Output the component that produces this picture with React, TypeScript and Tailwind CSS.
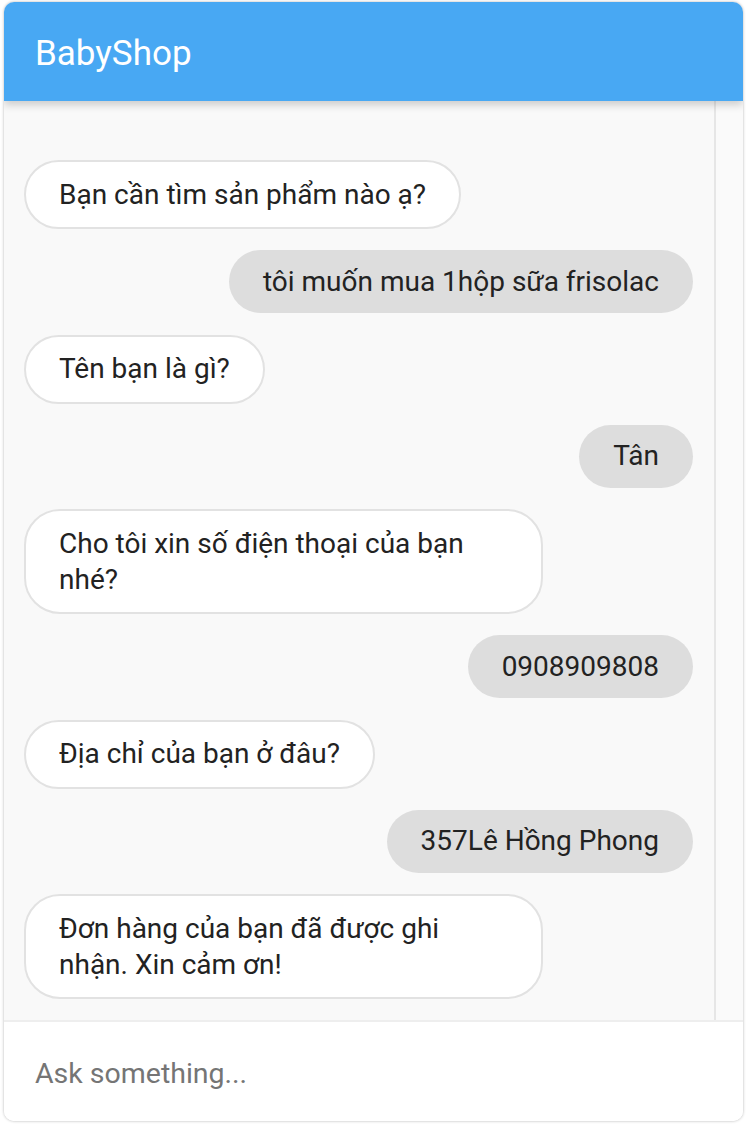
import React from 'react';

type Msg = { from: 'bot' | 'user'; text: string };

const messages: Msg[] = [
  { from: 'bot', text: 'Bạn cần tìm sản phẩm nào ạ?' },
  { from: 'user', text: 'tôi muốn mua 1hộp sữa frisolac' },
  { from: 'bot', text: 'Tên bạn là gì?' },
  { from: 'user', text: 'Tân' },
  { from: 'bot', text: 'Cho tôi xin số điện thoại của bạn nhé?' },
  { from: 'user', text: '0908909808' },
  { from: 'bot', text: 'Địa chỉ của bạn ở đâu?' },
  { from: 'user', text: '357Lê Hồng Phong' },
  { from: 'bot', text: 'Đơn hàng của bạn đã được ghi nhận. Xin cảm ơn!' },
];

export default function App() {
  return (
    <div className="min-h-screen bg-white pt-[2px] pl-[4px] pr-[3px] pb-[3px] font-['Roboto',sans-serif]">
      <div className="h-[1119px] flex flex-col bg-white rounded-[10px] overflow-hidden shadow-[0_0_3px_rgba(0,0,0,0.3)]">
        {/* Header */}
        <div className="relative z-10 h-[99px] shrink-0 bg-[#48a8f3] flex items-center pl-[31px] pt-[4px] shadow-[0_4px_8px_rgba(0,0,0,0.18)]">
          <h1 className="text-[35px] text-white font-normal leading-none">BabyShop</h1>
        </div>

        {/* Messages */}
        <div className="flex-1 flex bg-[#f9f9f9] overflow-hidden">
          <div className="flex-1 flex flex-col gap-[21.25px] pt-[59px] pl-[20px] pr-[21px]">
            {messages.map((m, i) =>
              m.from === 'bot' ? (
                <div key={i} className="flex justify-start">
                  <div className="max-w-[519px] bg-white border-2 border-[#e2e2e2] rounded-[36px] px-[33px] py-[14.5px] text-[28px] leading-[36px] text-[#222]">
                    {m.text}
                  </div>
                </div>
              ) : (
                <div key={i} className="flex justify-end">
                  <div className="max-w-[519px] bg-[#dddddd] rounded-[32px] px-[34px] py-[13.5px] text-[28px] leading-[36px] text-[#222]">
                    {m.text}
                  </div>
                </div>
              )
            )}
          </div>
          {/* scrollbar track */}
          <div className="w-[29px] shrink-0 border-l-2 border-[#e6e6e6] bg-[#fafafa]" />
        </div>

        {/* Input */}
        <div className="h-[101px] shrink-0 border-t-2 border-[#eeeeee] bg-white flex items-center pl-[31px] pt-[6px]">
          <input
            placeholder="Ask something..."
            className="w-full bg-transparent outline-none text-[28.5px] text-[#222] placeholder:text-[#757575]"
          />
        </div>
      </div>
    </div>
  );
}
